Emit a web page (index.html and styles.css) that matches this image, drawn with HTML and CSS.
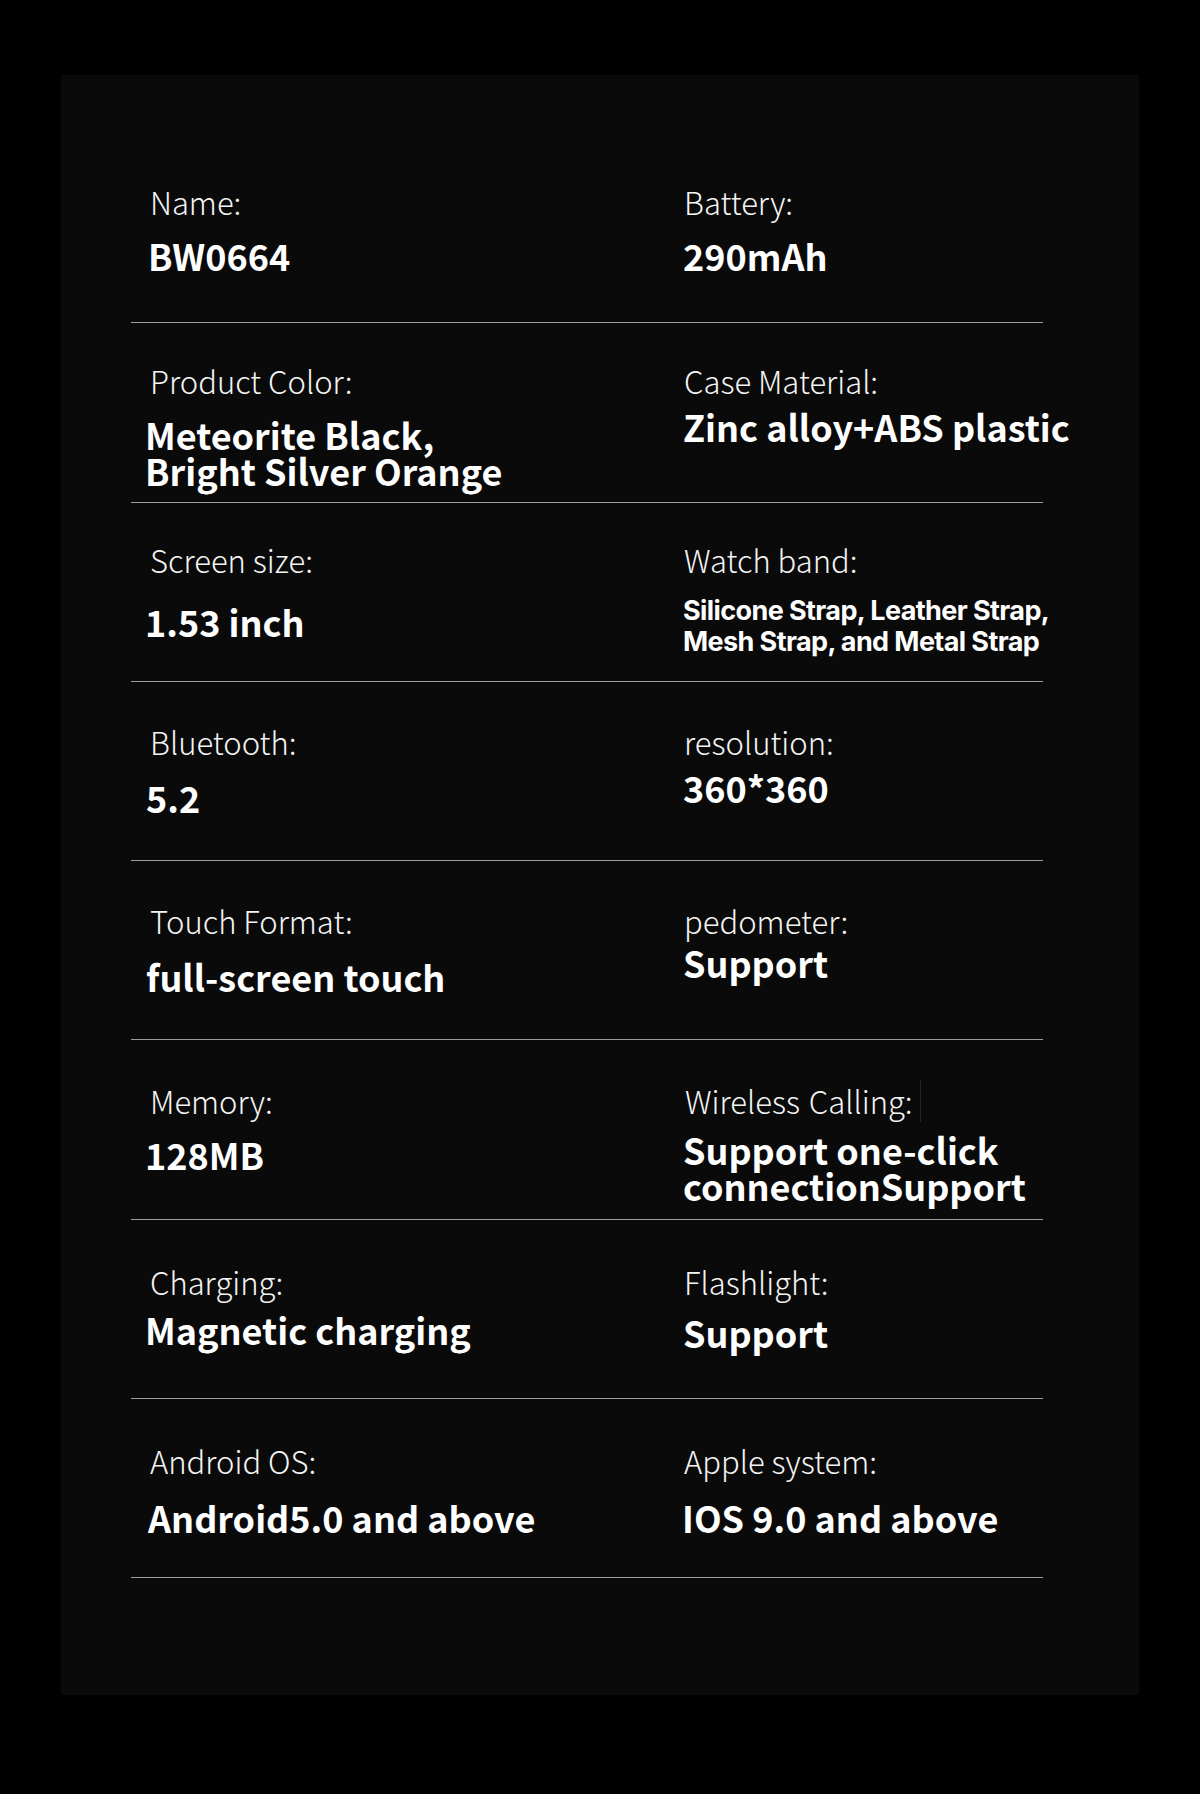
FILE: index.html
```html
<!DOCTYPE html>
<html lang="en">
<head>
<meta charset="utf-8">
<title>BW0664 Specifications</title>
<link rel="stylesheet" href="styles.css">
</head>
<body>
<main class="panel">
  <section class="specs">
    <div class="row">
      <div class="cell cell-left">
        <div class="label">Name:</div>
        <div class="value indent-2">BW0664</div>
      </div>
      <div class="cell cell-right">
        <div class="label">Battery:</div>
        <div class="value">290mAh</div>
      </div>
    </div>
    <div class="row">
      <div class="cell cell-left">
        <div class="label">Product Color:</div>
        <div class="value">Meteorite Black,<br>Bright Silver Orange</div>
      </div>
      <div class="cell cell-right">
        <div class="label">Case Material:</div>
        <div class="value gap-s">Zinc alloy+ABS plastic</div>
      </div>
    </div>
    <div class="row">
      <div class="cell cell-left">
        <div class="label">Screen size:</div>
        <div class="value gap-xl">1.53 inch</div>
      </div>
      <div class="cell cell-right">
        <div class="label">Watch band:</div>
        <div class="value value-alt">Silicone Strap, Leather Strap,<br>Mesh Strap, and Metal Strap</div>
      </div>
    </div>
    <div class="row">
      <div class="cell cell-left">
        <div class="label">Bluetooth:</div>
        <div class="value gap-l indent-1">5.2</div>
      </div>
      <div class="cell cell-right">
        <div class="label">resolution:</div>
        <div class="value gap-s">360*360</div>
      </div>
    </div>
    <div class="row">
      <div class="cell cell-left">
        <div class="label">Touch Format:</div>
        <div class="value gap-l indent-1">full-screen touch</div>
      </div>
      <div class="cell cell-right">
        <div class="label">pedometer:</div>
        <div class="value gap-xs">Support</div>
      </div>
    </div>
    <div class="row">
      <div class="cell cell-left">
        <div class="label">Memory:</div>
        <div class="value">128MB</div>
      </div>
      <div class="cell cell-right">
        <div class="label label-wireless">Wireless Calling:<span class="caret"></span></div>
        <div class="value gap-m">Support one-click<br>connectionSupport</div>
      </div>
    </div>
    <div class="row">
      <div class="cell cell-left">
        <div class="label">Charging:</div>
        <div class="value gap-m">Magnetic charging</div>
      </div>
      <div class="cell cell-right">
        <div class="label">Flashlight:</div>
        <div class="value gap-d">Support</div>
      </div>
    </div>
    <div class="row">
      <div class="cell cell-left">
        <div class="label">Android OS:</div>
        <div class="value gap-l indent-2">Android5.0 and above</div>
      </div>
      <div class="cell cell-right">
        <div class="label">Apple system:</div>
        <div class="value gap-l outdent">IOS 9.0 and above</div>
      </div>
    </div>
  </section>
</main>
</body>
</html>
```

FILE: styles.css
```css
html, body {
  margin: 0;
  padding: 0;
}

body {
  background: #000000;
  width: 1200px;
  height: 1794px;
  overflow: hidden;
  font-family: "Noto Sans CJK SC", "Noto Sans", sans-serif;
  color: #ffffff;
}

.panel {
  box-sizing: border-box;
  margin: 75px 0 0 61px;
  width: 1078px;
  height: 1620px;
  background: #0a0a0a;
  padding: 69px 0 0 70px;
}

.specs {
  width: 912px;
}

.row {
  display: grid;
  grid-template-columns: 553px 1fr;
  height: 178.3px;
  border-bottom: 1px solid #9c9c9c;
}

.cell {
  padding-top: 44px;
  min-width: 0;
}

/* labels drift slightly upward in the first rows of the reference */
.row:nth-child(-n+3) .cell {
  padding-top: 39.5px;
}

.row:nth-child(4) .cell,
.row:nth-child(5) .cell {
  padding-top: 41.7px;
}

.row:nth-child(6) .cell {
  padding-top: 42.9px;
}

.cell-left {
  padding-left: 19px;
}

.cell-right {
  padding-left: 0;
}

.label {
  font-size: 31px;
  font-weight: 300;
  line-height: 36px;
  color: #f4f4f4;
  white-space: nowrap;
}

.label-wireless {
  position: relative;
  display: inline-block;
  margin-left: 1px;
  word-spacing: 2px;
}

.caret {
  position: absolute;
  right: -8px;
  top: -3px;
  width: 1px;
  height: 42px;
  background: #262626;
}

.value {
  margin-top: 17px;
  margin-left: -5px;
  font-size: 36px;
  font-weight: 700;
  line-height: 36px;
  color: #ffffff;
  white-space: nowrap;
}

.cell-right .value {
  margin-left: -1px;
}

.value.indent-1 {
  margin-left: -4px;
}

.value.indent-2 {
  margin-left: -2px;
}

.cell-right .value.outdent {
  margin-left: -2px;
}

.value.gap-xs {
  margin-top: 5px;
}

.value.gap-s {
  margin-top: 9.5px;
}

.value.gap-m {
  margin-top: 11.5px;
}

.value.gap-d {
  margin-top: 14px;
}

.value.gap-l {
  margin-top: 19.5px;
}

.value.gap-xl {
  margin-top: 25px;
}

.value.value-alt {
  margin-top: 17px;
  font-family: "Inter", "Noto Sans", sans-serif;
  font-size: 27px;
  font-weight: 700;
  line-height: 31px;
  letter-spacing: -0.6px;
}
```
